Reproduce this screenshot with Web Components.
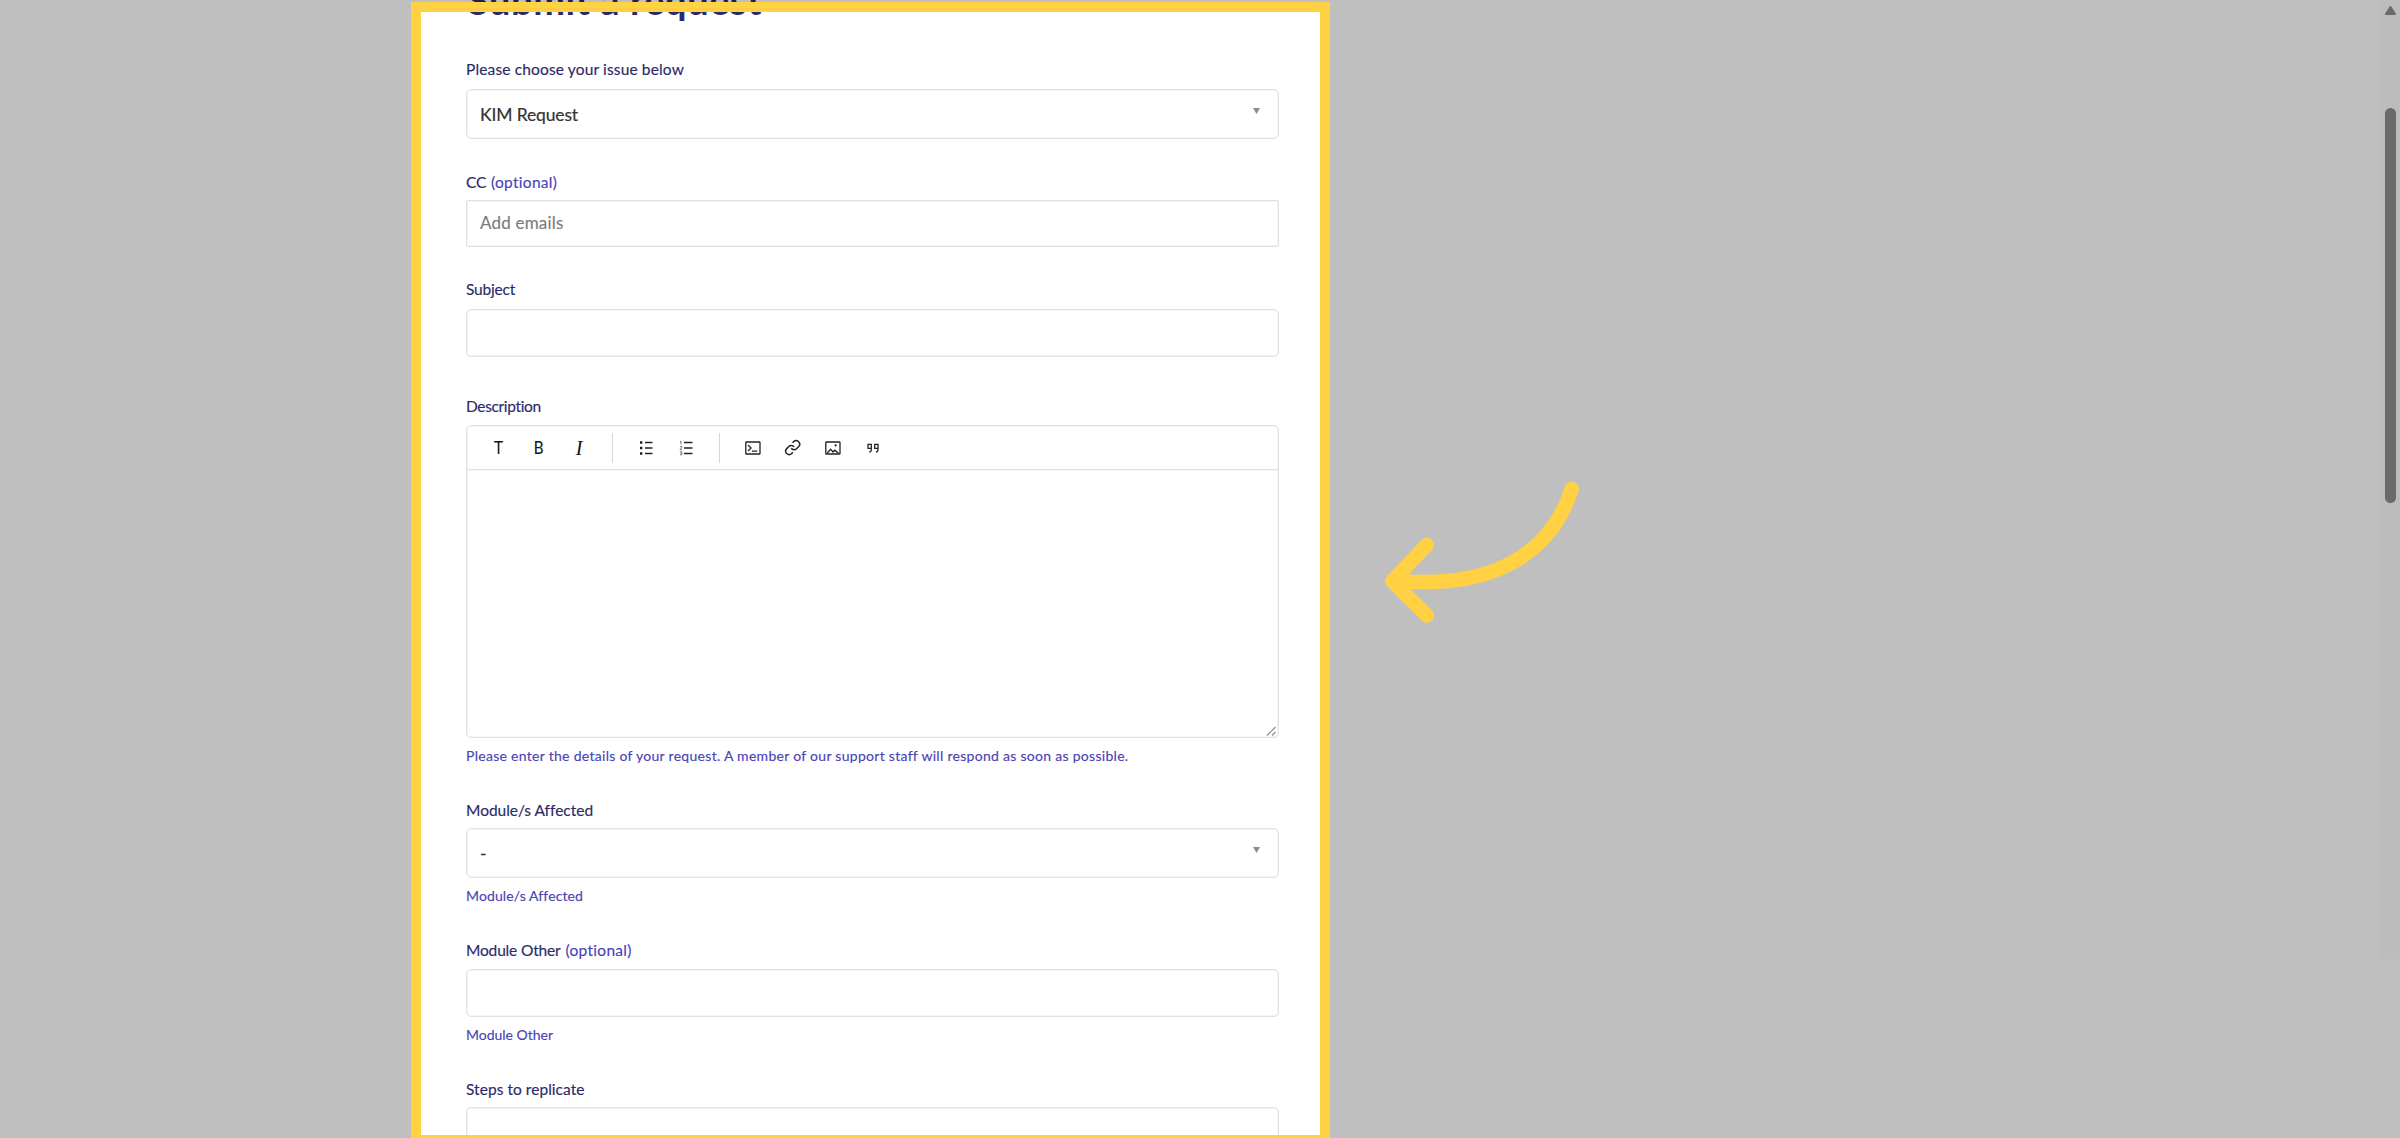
<!DOCTYPE html>
<html lang="en">
<head>
<meta charset="utf-8">
<title>Submit a request</title>
<style>
    html, body { margin: 0; height: 100%; overflow: hidden; background: #fff; }
    body { font-family: Lato, "Open Sans", sans-serif; color: #2b2a69; }
</style>
</head>
<body>
<request-page>
    <fit-text slot="title" width="294">Submit a request</fit-text>

    <form-field label="Please choose your issue below" label-width="218" style="--space: 10px">
        <select-box><fit-text width="98">KIM Request</fit-text></select-box>
    </form-field>

    <form-field label="CC" label-width="20" optional style="--before: 33px; --space: 8px">
        <text-box style="--height: 47px; --radius: 2px"><fit-text width="83.5">Add emails</fit-text></text-box>
    </form-field>

    <form-field label="Subject" label-width="49" style="--before: 32px; --space: 10px">
        <text-box></text-box>
    </form-field>

    <form-field label="Description" label-width="75" style="--before: 39px"
        hint="Please enter the details of your request. A member of our support staff will respond as soon as possible." hint-width="662">
        <rich-editor></rich-editor>
    </form-field>

    <form-field label="Module/s Affected" label-width="126.5" style="--before: 35px; --space: 8px"
        hint="Module/s Affected" hint-width="116.5">
        <select-box><span>-</span></select-box>
    </form-field>

    <form-field label="Module Other" label-width="94.5" optional style="--before: 35px"
        hint="Module Other" hint-width="87">
        <text-box></text-box>
    </form-field>

    <form-field label="Steps to replicate" label-width="118.5" style="--before: 35px; --space: 8px">
        <text-box style="--height: 120px"></text-box>
    </form-field>
</request-page>
<spotlight-frame></spotlight-frame>
<hint-arrow></hint-arrow>
<scroll-rail></scroll-rail>

<script>
// Single line of text, tracked so that it fills the given width
class FitText extends HTMLElement {
    connectedCallback() {
        if (this.shadowRoot) return;
        this.attachShadow({ mode: 'open' });
        this.shadowRoot.innerHTML = `
            <style>
                :host { display: inline-block; white-space: nowrap; }
            </style>
            <span><slot></slot></span>
        `;
        const span = this.shadowRoot.querySelector('span');
        const width = parseFloat(this.getAttribute('width'));
        const natural = span.getBoundingClientRect().width;
        if (width && natural) {
            span.style.letterSpacing = ((width - natural) / this.textContent.length).toFixed(3) + 'px';
        }
    }
}

// Page column with the heading and the list of fields
class RequestPage extends HTMLElement {
    constructor() {
        super();
        this.attachShadow({ mode: 'open' });
        this.shadowRoot.innerHTML = `
            <style>
                :host { display: block; height: 100vh; overflow: hidden; }
                main { width: 813px; margin-left: 466px; }
                h1 {
                    margin: -28px 0 0 2px; height: 87px;
                    font-size: 38px; line-height: 56px; font-weight: 700;
                }
            </style>
            <main>
                <h1><slot name="title"></slot></h1>
                <slot></slot>
            </main>
        `;
    }
}

class FormField extends HTMLElement {
    constructor() {
        super();
        this.attachShadow({ mode: 'open' });
    }

    connectedCallback() {
        const hint = this.getAttribute('hint');
        this.shadowRoot.innerHTML = `
            <style>
                :host { display: block; margin-top: var(--before, 0); }
                .label {
                    display: flex; gap: 5px; height: 20px; line-height: 20px;
                    margin-bottom: var(--space, 9px);
                    font-size: 15.5px; -webkit-text-stroke: 0.15px;
                }
                .optional, .hint { color: #4a43b5; }
                .hint {
                    height: 18px; line-height: 18px; margin-top: 9px;
                    font-size: 14px; -webkit-text-stroke: 0.15px;
                }
            </style>
            <div class="label">
                <fit-text width="${this.getAttribute('label-width')}">${this.getAttribute('label')}</fit-text>
                ${this.hasAttribute('optional') ? '<fit-text class="optional" width="66.5">(optional)</fit-text>' : ''}
            </div>
            <slot></slot>
            ${hint ? `<div class="hint"><fit-text width="${this.getAttribute('hint-width')}">${hint}</fit-text></div>` : ''}
        `;
    }
}

class TextBox extends HTMLElement {
    constructor() {
        super();
        this.attachShadow({ mode: 'open' });
        this.shadowRoot.innerHTML = `
            <style>
                :host {
                    display: flex; align-items: center; box-sizing: border-box;
                    height: var(--height, 48px); padding: 0 13px 2px;
                    border: 1px solid #e1e1e1; border-radius: var(--radius, 5px);
                    box-shadow: inset 0 0 0 1px #f5f5f5;
                    font-size: 17px; color: #7b7b7b; -webkit-text-stroke: 0.15px;
                }
            </style>
            <slot></slot>
        `;
    }
}

class SelectBox extends HTMLElement {
    constructor() {
        super();
        this.attachShadow({ mode: 'open' });
        this.shadowRoot.innerHTML = `
            <style>
                :host {
                    display: flex; align-items: center; justify-content: space-between;
                    box-sizing: border-box; height: 50px; padding: 0 18px 0 13px;
                    border: 1px solid #e1e1e1; border-radius: 5px;
                    box-shadow: inset 0 0 0 1px #f5f5f5;
                    font-size: 17.5px; color: #333; -webkit-text-stroke: 0.2px;
                }
                svg { width: 7px; height: 6px; margin-bottom: 7px; fill: #8c8c90; }
            </style>
            <slot></slot>
            <svg viewBox="0 0 7 6"><path d="M0 0h7L3.5 6z"/></svg>
        `;
    }
}

class RichEditor extends HTMLElement {
    constructor() {
        super();
        this.attachShadow({ mode: 'open' });
        this.shadowRoot.innerHTML = `
            <style>
                :host {
                    display: flex; flex-direction: column; box-sizing: border-box; height: 313px;
                    border: 1px solid #e1e1e1; border-radius: 5px;
                    box-shadow: inset 0 0 0 1px #f5f5f5;
                }
                .bar {
                    display: flex; align-items: center; height: 43px; padding-left: 12px;
                    border-bottom: 1px solid #e0e0e0; box-shadow: 0 1px #f5f5f5;
                }
                .bar > b, .bar > svg { flex: none; width: 40px; }
                b { font: 400 18.5px/24px Roboto, sans-serif; text-align: center; color: #111; }
                b span { display: inline-block; transform: scaleX(0.86); }
                b.italic { font-family: "Liberation Serif", serif; font-style: italic; font-size: 20px; }
                i { width: 1px; height: 30px; margin: 0 13px; background: #d6d6d6; }
                svg { height: 20px; fill: none; stroke: #222; stroke-width: 1.3; }
                .area { flex: 1; display: flex; justify-content: flex-end; align-items: flex-end; }
                .grip { width: 12px; height: 12px; stroke: #8a8a8a; stroke-width: 1.2; }
            </style>
            <div class="bar">
                <b><span>T</span></b>
                <b><span>B</span></b>
                <b class="italic">I</b>
                <i></i>
                <svg viewBox="0 0 40 20">
                    <path d="M19 4.5h7.5M19 10h7.5M19 15.5h7.5"/>
                    <path stroke-width="2.4" d="M14 4.5h2.4M14 10h2.4M14 15.5h2.4"/>
                </svg>
                <svg viewBox="0 0 40 20">
                    <path d="M18 4.5h8.5M18 10h8.5M18 15.5h8.5"/>
                    <path stroke="#666" stroke-width="0.9" d="M14 3.4h1v3M14 8.6h1.7v1.3L14 11.6h2M14 13.8h1.8v3H14M14.4 15.3h1.2"/>
                </svg>
                <i></i>
                <svg viewBox="0 0 40 20">
                    <rect x="12.8" y="4" width="14.2" height="12" rx="0.6"/>
                    <path d="M15 7l3 3-3 3M19 13.2h5.2"/>
                </svg>
                <svg viewBox="0 0 40 20">
                    <g transform="translate(11.3 1.2) scale(0.7)" stroke-width="2.1">
                        <path d="M10 13a5 5 0 0 0 7.54.54l3-3a5 5 0 0 0-7.07-7.07l-1.72 1.71"/>
                        <path d="M14 11a5 5 0 0 0-7.54-.54l-3 3a5 5 0 0 0 7.07 7.07l1.71-1.71"/>
                    </g>
                </svg>
                <svg viewBox="0 0 40 20">
                    <rect x="12.8" y="4" width="14.2" height="12" rx="0.6"/>
                    <path d="M14.3 15l3.3-3.8 2.4 2.8 1.8-1.8 3.7 3"/>
                    <circle cx="22.6" cy="7.4" r="1.1" fill="#222" stroke="none"/>
                </svg>
                <svg viewBox="0 0 40 20" stroke-width="1.8">
                    <path d="M18.3 10.4h-3.3V6.3h3.3v5.6c0 1.3-.6 1.9-2 2.1M25 10.4h-3.3V6.3h3.3v5.6c0 1.3-.6 1.9-2 2.1"/>
                </svg>
            </div>
            <div class="area">
                <svg class="grip" viewBox="0 0 12 12"><path d="M1 10.5L9.5 2M6 10.5L9.5 7"/></svg>
            </div>
        `;
    }
}

// Dims the page around the highlighted column
class SpotlightFrame extends HTMLElement {
    constructor() {
        super();
        this.attachShadow({ mode: 'open' });
        this.shadowRoot.innerHTML = `
            <style>
                :host {
                    position: absolute; left: 411px; top: 2px; box-sizing: border-box;
                    width: 919px; height: 1143px; border: 10px solid #ffd143;
                    box-shadow: 0 0 0 2400px rgba(0, 0, 0, 0.25);
                }
            </style>
        `;
    }
}

class HintArrow extends HTMLElement {
    constructor() {
        super();
        this.attachShadow({ mode: 'open' });
        this.shadowRoot.innerHTML = `
            <style>
                :host { position: absolute; left: 1360px; top: 460px; }
                svg { display: block; fill: none; stroke: #ffd143; stroke-width: 14.5; stroke-linecap: round; stroke-linejoin: round; }
            </style>
            <svg width="240" height="180" viewBox="0 0 240 180">
                <path d="M211.7 29C193 87 141 131 33 120.5"/>
                <path d="M66.8 85L32.2 121.2L67 155.5"/>
            </svg>
        `;
    }
}

class ScrollRail extends HTMLElement {
    constructor() {
        super();
        this.attachShadow({ mode: 'open' });
        this.shadowRoot.innerHTML = `
            <style>
                :host {
                    position: absolute; right: 0; top: 0; width: 19px; height: 959px;
                    display: flex; flex-direction: column; align-items: center;
                    background: #bcbcbc;
                }
                svg { width: 11px; height: 9px; margin-top: 6px; fill: #6a6a6a; stroke: #6a6a6a; stroke-width: 2; stroke-linejoin: round; }
                div { width: 11px; height: 395px; margin-top: 93px; border-radius: 6px; background: #6a6a6a; }
            </style>
            <svg viewBox="0 0 11 9"><path d="M5.5 1L10 8H1z"/></svg>
            <div></div>
        `;
    }
}

customElements.define('request-page', RequestPage);
customElements.define('form-field', FormField);
customElements.define('text-box', TextBox);
customElements.define('select-box', SelectBox);
customElements.define('rich-editor', RichEditor);
customElements.define('spotlight-frame', SpotlightFrame);
customElements.define('hint-arrow', HintArrow);
customElements.define('scroll-rail', ScrollRail);
// Last, because it measures text inside the elements above
customElements.define('fit-text', FitText);
</script>
</body>
</html>
